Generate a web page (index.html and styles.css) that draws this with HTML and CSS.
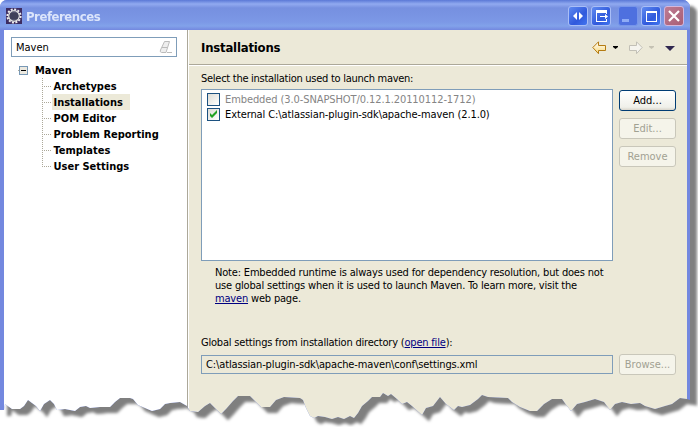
FILE: index.html
```html
<!DOCTYPE html>
<html lang="en">
<head>
<meta charset="utf-8">
<title>Preferences</title>
<link rel="stylesheet" href="styles.css">
</head>
<body>
<div class="shadow">
<div class="window">
  <header class="titlebar">
    <svg class="app-icon" width="16" height="16" viewBox="0 0 16 16"><rect width="16" height="16" fill="#3c2c60"/><circle cx="8" cy="8" r="6.600" fill="none" stroke="#eee" stroke-width="2" stroke-dasharray="2 1.450"/><circle cx="8" cy="8" r="5.300" fill="#51516c" stroke="#ddd" stroke-width="1.300"/><path d="M4 6h8M3.500 8h9M4 10h8" stroke="#303048"/></svg>
    <h1>Preferences</h1>
    <div class="controls">
      <button class="tb"><svg width="18" height="18" viewBox="0 0 18 18"><path d="M8 5v8L4 9zM10 5v8l4-4z" fill="#fff"/></svg></button>
      <button class="tb second"><svg width="18" height="18" viewBox="0 0 18 18"><path d="M4 3h11v4h-1V6H5v8h9v-2h1v3H4z" fill="#fff"/><path d="M8 9h5V7l3 2.500-3 2.500v-2H8z" fill="#fff"/></svg></button>
      <button class="tb min"><svg width="18" height="18" viewBox="0 0 18 18"><path d="M3 12h7v3H3z" fill="#8eabf5"/></svg></button>
      <button class="tb"><svg width="18" height="18" viewBox="0 0 18 18"><path d="M4 4h11v11H4zM5 6v8h9V6z" fill="#fff" fill-rule="evenodd"/></svg></button>
      <button class="tb close"><svg width="18" height="18" viewBox="0 0 18 18"><path d="M4 4l10 10M14 4L4 14" stroke="#fff" stroke-width="2.200"/></svg></button>
    </div>
  </header>
  <div class="body">
    <nav class="side">
      <div class="filter"><span>Maven</span>
        <svg width="14" height="13" viewBox="0 0 14 13"><path d="M5.500.5h5L7 11.500H2.500Q.5 11 1.500 9z" fill="#eee" stroke="#bbb"/><path d="M3 6.500h5M8 11.500h5" stroke="#bbb"/></svg>
      </div>
      <div class="root"><svg width="10" height="9" viewBox="0 0 10 9"><path d="M0 4.500h1" stroke="#aca899"/><rect x="1.500" y=".5" width="8" height="8" fill="#ece9e0" stroke="#7898b5"/><path d="M3 4.500h5" stroke="#000"/></svg><b>Maven</b></div>
      <ul>
        <li><span>Archetypes</span></li>
        <li><span class="selected">Installations</span></li>
        <li><span>POM Editor</span></li>
        <li><span>Problem Reporting</span></li>
        <li><span>Templates</span></li>
        <li><span>User Settings</span></li>
      </ul>
    </nav>
    <main>
      <div class="head">
        <h2>Installations</h2>
        <svg width="84" height="14" viewBox="0 0 84 14">
          <defs><linearGradient id="g" x2="0" y2="1"><stop offset="0" stop-color="#fff"/><stop offset="1" stop-color="#f8d878"/></linearGradient></defs>
          <path d="M.8 6.500L6.500.8V4.500h7v5h-7v3.200z" fill="url(#g)" stroke="#b47b12"/>
          <path d="M21 5h5v1l-2.500 2L21 6z" fill="#000"/>
          <path d="M50.200 6.500L44.500.8V4.500h-7v5h7v3.200z" fill="#f5f4ee" stroke="#c2c0b6"/>
          <path d="M57 5h5v1l-2.500 2L57 6z" fill="#c5c2b4"/>
          <path d="M73 5h10l-5 5z" fill="#302850"/>
        </svg>
      </div>
      <div class="content">
        <p class="label select">Select the installation used to launch maven:</p>
        <div class="row">
          <div class="list">
            <div class="item off"><i class="check"></i><span class="embedded">Embedded (3.0-SNAPSHOT/0.12.1.20110112-1712)</span></div>
            <div class="item"><i class="check"><svg width="11" height="11" viewBox="0 0 11 11"><path d="M2 4v3l2 2 5-5V1L4 6z" fill="#21a121"/></svg></i><span class="external">External C:\atlassian-plugin-sdk\apache-maven (2.1.0)</span></div>
          </div>
          <div class="buttons"><button class="btn primary">Add...</button><button class="btn">Edit...</button><button class="btn">Remove</button></div>
        </div>
        <p class="note">Note: Embedded runtime is always used for dependency resolution, but does not<br>use global settings when it is used to launch Maven. To learn more, visit the<br><a>maven</a> web page.</p>
        <p class="label global">Global settings from installation directory (<a>open file</a>):</p>
        <div class="row"><div class="path">C:\atlassian-plugin-sdk\apache-maven\conf\settings.xml</div><button class="btn">Browse...</button></div>
      </div>
    </main>
  </div>
</div>
</div>
</body>
</html>
```

FILE: styles.css
```css
* { box-sizing: border-box; }
body { margin: 0; width: 698px; height: 427px; overflow: hidden; background: #fff; color: #000; font: 11px/13px "DejaVu Sans Condensed", "DejaVu Sans", sans-serif; font-stretch: condensed; white-space: nowrap; }
h1, h2, p, ul { margin: 0; padding: 0; }
svg { display: block; flex: none; }
a { color: #000080; text-decoration: underline; }
.shadow { filter: drop-shadow(7px 6px 1.5px rgba(0,0,0,.5)); }
.window {
  width: 690px; height: 422px; background: #7388df; border-radius: 7px 7px 0 0; overflow: hidden;
  clip-path: polygon(0 3px, 3px 0, 686px 0, 690px 4px, 690px 400px, 687px 399px, 680px 398px, 672px 404px, 665px 406px, 655px 409px, 645px 406px, 640px 403px, 631px 404px, 622px 402px, 615px 404px, 610px 410px, 604px 402px, 595px 399px, 585px 402px, 577px 404px, 571px 411px, 567px 406px, 562px 399px, 552px 399px, 544px 404px, 537px 411px, 530px 411px, 520px 407px, 512px 402px, 508px 398px, 488px 397px, 482px 395px, 478px 399px, 470px 405px, 462px 407px, 458px 406px, 454px 410px, 446px 404px, 440px 397px, 433px 406px, 426px 408px, 422px 415px, 412px 406px, 407px 402px, 402px 404px, 397px 399px, 391px 394px, 388px 396px, 383px 393px, 380px 397px, 372px 397px, 368px 401px, 362px 406px, 358px 413px, 354px 418px, 350px 416px, 344px 419px, 338px 417px, 332px 419px, 325px 417px, 318px 416px, 314px 418px, 310px 416px, 306px 408px, 303px 400px, 300px 398px, 284px 397px, 276px 400px, 270px 407px, 261px 407px, 256px 402px, 250px 396px, 238px 396px, 233px 401px, 226px 409px, 221px 414px, 215px 408px, 210px 403px, 205px 406px, 198px 412px, 190px 411px, 187px 406px, 180px 402px, 170px 403px, 165px 404px, 160px 409px, 152px 411px, 145px 408px, 138px 405px, 133px 399px, 130px 398px, 120px 398px, 115px 402px, 110px 407px, 100px 407px, 90px 408px, 86px 406px, 80px 407px, 75px 411px, 70px 410px, 65px 409px, 57px 410px, 54px 404px, 50px 400px, 44px 404px, 40px 411px, 36px 406px, 32px 403px, 28px 400px, 24px 406px, 20px 409px, 12px 409px, 5px 404px, 4px 410px, 0 410px);
}
.titlebar { height: 30px; display: flex; align-items: center; padding: 2px 6px 0; background: linear-gradient(#5b78d6, #91aaf0 4px, #7690e0 8px, #7c98e6 22px, #82a2ea 26px, #7388df); }
.app-icon { margin-right: 4px; }
h1 { font: bold 13px/18px "DejaVu Sans Condensed", sans-serif; letter-spacing: -.45px; padding-top: 1px; color: #dce5fb; }
.controls { display: flex; gap: 3px; margin-left: auto; }
button { font: inherit; padding: 0; display: grid; place-items: center; }
.tb { width: 20px; height: 20px; border: 1px solid #a9bef7; border-radius: 3px; background: linear-gradient(135deg, #5f8af0, #3059dc 60%, #4275ef); }
.tb.second { margin-right: 4px; }
.tb.min { background: #4e70df; border-color: #7795ea; }
.tb.close { background: linear-gradient(135deg, #bd7b93, #a95e75); border-color: #d4b7dc; }
.body { display: flex; height: 392px; margin: 0 3px 0 4px; }
.side { width: 185px; flex: none; background: #fff; border-right: 1px solid #fff; box-shadow: inset -1px 0 #aca899; padding: 7px 1px 0 7px; }
.filter { width: 166px; height: 20px; border: 1px solid #7f9db9; display: flex; justify-content: space-between; align-items: center; padding: 0 3px 0 4px; }
.root { display: flex; align-items: center; height: 16px; margin: 5px 0 0 7px; gap: 7px; }
ul { list-style: none; font-weight: bold; margin-left: 31px; }
li { width: 140px; height: 16px; display: flex; align-items: center; background: linear-gradient(90deg, #aca899 1px, transparent 1px) 0 8px / 2px 1px repeat-x; position: relative; }
li::before { content: ""; position: absolute; left: 0; top: 0; width: 1px; height: 16px; background: linear-gradient(#aca899 1px, transparent 1px) 0 0 / 1px 2px; }
li:last-child::before { height: 9px; }
li span { background: #fff; line-height: 15px; padding-top: 1px; margin-left: 10px; padding-left: 1.5px; flex: 1; }
li .selected { background: #ece9d8; flex: none; width: 78px; }
li:nth-child(2)::after { content: ""; flex: 1; height: 16px; background: #fff; }
main { flex: 1; background: #ece9d8; }
.head { height: 36px; padding: 0 11px 0 12px; border-bottom: 1px solid #fff; box-shadow: inset 0 -1px #aca899; display: flex; justify-content: space-between; align-items: center; }
h2 { font: bold 13px/18px "DejaVu Sans Condensed", sans-serif; letter-spacing: -.2px; padding-top: 1px; }
.content { padding: 6px 11px 0 12px; }
.row { display: flex; gap: 6px; }
.list { width: 412px; height: 172px; border: 1px solid #7f9db9; background: #fff; padding: 2px 5px; }
.label { margin-bottom: 4px; }
.select { letter-spacing: -.27px; }
.embedded { letter-spacing: -.09px; }
.external { letter-spacing: -.1px; }
.item { height: 15px; display: flex; align-items: center; gap: 5px; }
.off { color: #858585; }
.check { width: 13px; height: 13px; border: 1px solid #1c5180; background: linear-gradient(135deg, #dddcd5, #fff); }
.buttons { display: flex; flex-direction: column; gap: 7px; padding-top: 1px; }
.btn { width: 57px; height: 21px; border: 1px solid #c9c7ba; border-radius: 3px; background: #f5f4ea; color: #a1a192; }
.btn.primary { background: linear-gradient(#fff, #f0f0ea 85%, #dad6cc); border-color: #003c74; color: #000; }
.note { margin: 5px 0 0 14px; letter-spacing: -.18px; }
.global { margin: 31px 0 5px; letter-spacing: -.2px; }
.path { width: 412px; height: 19px; border: 1px solid #7f9db9; margin-top: 1px; padding: 2px 4px; letter-spacing: -.13px; }
```
